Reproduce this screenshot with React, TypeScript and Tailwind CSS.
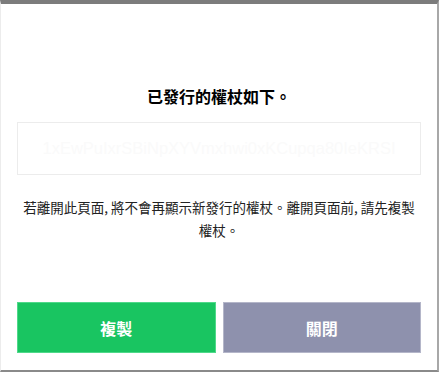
export default function App() {
  return (
    <div
      className="flex h-[372px] w-[439px] flex-col border-t-4 border-r-2 border-b-2 border-l border-t-[#7c7c7c] border-r-[#a8a8a8] border-b-[#8a8a8a] border-l-[#ececec] bg-white"
      style={{ fontFamily: '"Noto Sans CJK TC", "Noto Sans", sans-serif' }}
    >
      <div className="flex flex-1 flex-col px-[16px]">
        <h2 className="mt-[81px] text-center text-[16px] font-bold leading-[22px] text-black">
          已發行的權杖如下。
        </h2>

        <div className="mt-[15px] flex h-[53px] items-center justify-center overflow-hidden border border-[#ececec] px-2">
          <span
            className="whitespace-nowrap text-[16.5px] text-[#fafafa]"
            style={{ fontFamily: '"Liberation Sans", Arial, sans-serif' }}
          >
            1xEwPuIxrSBiNpXYVmxhwi0xKCupqa80IeKRSI
          </span>
        </div>

        <p className="mt-[21px] text-center text-[13.5px] leading-[23px] text-[#222]">
          若離開此頁面, 將不會再顯示新發行的權杖。離開頁面前, 請先複製權杖。
        </p>

        <div className="mt-auto mb-[17px] flex gap-[7px]">
          <button className="h-[51px] flex-1 border border-[#4fd98a] bg-[#19c561] text-[16px] font-bold text-white">
            複製
          </button>
          <button className="h-[51px] flex-1 border border-[#b4b6c9] bg-[#8e91ad] text-[16px] font-bold text-white">
            關閉
          </button>
        </div>
      </div>
    </div>
  );
}
